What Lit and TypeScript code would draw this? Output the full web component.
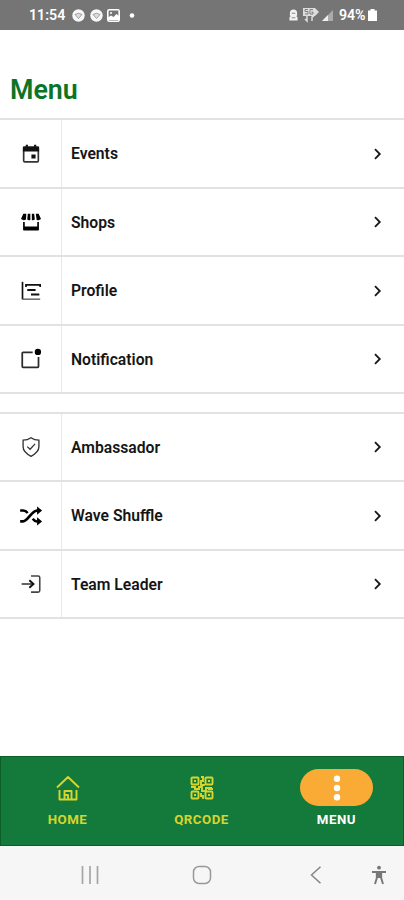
import { LitElement, html, css, svg } from "lit";
import { customElement } from "lit/decorators.js";

const icons: Record<string, unknown> = {
  events: svg`<path d="M7 1v3M17 1v3" stroke="#111" stroke-width="2.6"/><path d="M4.500 4h15a1.300 1.300 0 0 1 1.300 1.300v14.900a1.300 1.300 0 0 1-1.300 1.300h-15a1.300 1.300 0 0 1-1.300-1.300V5.300A1.300 1.300 0 0 1 4.500 4z" fill="none" stroke="#333" stroke-width="2"/><path d="M2.300 3h19.400v6H2.300zM12.500 12.500h5v5h-5z" fill="#111"/>`,
  shops: svg`<path d="M2.800 2h3.600l-.4 7Q3 10.800 0 8.500zM8.200 2h3v7.500q-2.300.8-3.700-.5zM13 2h2.800l.8 7q-2 1.300-3.600.5zM17.800 2h3.400l2.800 6.500q-2.600 2.300-5.300.7z" fill="#000"/><path d="M2.500 12h2v5.500h15V12h2v9.300q0 1-1 1h-17q-1 0-1-1z" fill="#000"/>`,
  profile: svg`<path d="M1.800 1v21" stroke="#111" stroke-width="2"/><path d="M1.800 21.800H23" stroke="#555" stroke-width="1.600"/><path d="M6 7.200V4.500h17v2.700" fill="none" stroke="#111" stroke-width="2.100"/><path d="M7.500 10.800h10M12 16.200h10" stroke="#111" stroke-width="2.400"/>`,
  notification: svg`<path d="M14 4H2.500q-1 0-1 1v16q0 1 1 1h17.500q1 0 1-1V9.500" fill="none" stroke="#2b2b2b" stroke-width="2.100"/><circle cx="20.300" cy="3.500" r="3.800" fill="#000"/>`,
  ambassador: svg`<path d="M12 .8q4 3 9.500 3v8q0 6.400-9.500 11.400-9.500-5-9.500-11.400v-8q5.500 0 9.500-3z" fill="none" stroke="#333" stroke-width="1.600"/><path d="m7.500 11.500 3.400 3.200 6-6.400" fill="none" stroke="#333" stroke-width="1.500"/>`,
  shuffle: svg`<path d="M-1 18.500h3.500C8 18.500 13 5.500 19 5.500h1" fill="none" stroke="#000" stroke-width="3.200"/><path d="M-1 5.500h3.500q3.300 0 5.500 3M14 15.300q2.300 3.200 5 3.200h1" fill="none" stroke="#000" stroke-width="3"/><path d="m19.300.5 6 5-6 5zM19.300 13.500l6 5-6 5z" fill="#000"/>`,
  leader: svg`<path d="M12 2.300h8.500q2 0 2 2v15.400q0 2-2 2H12" fill="none" stroke="#444" stroke-width="1.900"/><path d="M.8 12H14" stroke="#444" stroke-width="2"/><path d="m10 7.500 5 4.500-5 4.500" fill="none" stroke="#111" stroke-width="2.300"/>`,
};

const groups = [
  [["events", "Events"], ["shops", "Shops"], ["profile", "Profile"], ["notification", "Notification"]],
  [["ambassador", "Ambassador"], ["shuffle", "Wave Shuffle"], ["leader", "Team Leader"]],
];

@customElement("app-root")
export class AppRoot extends LitElement {
  static styles = css`
    :host { display: flex; flex-direction: column; width: 404px; height: 900px; background: #fff; font-family: Roboto, sans-serif; overflow: hidden; box-sizing: border-box; }
    * { box-sizing: border-box; }
    svg { display: block; flex: none; overflow: visible; }
    .status { height: 29.500px; flex: none; background: #757575; color: #fff; display: flex; align-items: center; padding: 1px 27px 0 29px; font-size: 14.200px; font-weight: 600; }
    .time { width: 43px; }
    .spacer { flex: 1; }
    .battery { width: 29px; margin-left: 5px; letter-spacing: -.1px; }
    h1 { margin: 0; height: 88.800px; flex: none; padding: 44.600px 0 0 10px; color: #0c7425; font-size: 26.800px; line-height: 32px; font-weight: 580; }
    .group { flex: none; border-top: 2px solid #e2e2e2; margin-bottom: 17.600px; }
    .row { height: 68.500px; display: flex; align-items: center; border-bottom: 2px solid #e2e2e2; }
    .icon { width: 61.500px; align-self: stretch; display: flex; align-items: center; justify-content: center; border-right: 1px solid #e8e8e8; }
    .icon svg { margin-left: 1px; }
    .label { flex: 1; padding-left: 9.500px; font-size: 15.700px; font-weight: 600; color: #151515; }
    .arrow { margin-right: 20px; }
    .tabs { margin-top: auto; height: 90px; flex: none; display: flex; background: #147a3c; border: 1px solid #0c5d28; }
    .tab { flex: 1; display: flex; flex-direction: column; align-items: center; padding-top: 12px; color: #d7d52d; font-size: 13.300px; font-weight: 680; letter-spacing: .5px; }
    .tab:nth-child(2) { padding-left: 1px; }
    .tab:last-child { padding-left: 2px; }
    .pill { width: 73px; height: 37px; display: flex; align-items: center; justify-content: center; border-radius: 19px; margin-bottom: 6px; }
    .active { color: #fff; }
    .active .pill { background: #faab36; }
    .tab span { line-height: 16px; }
    .nav { height: 54px; flex: none; background: #f6f6f6; display: grid; grid-template-columns: 146px 113px 114px 1fr; align-items: center; }
    .nav svg { margin-top: 3px; }
    .nav .recent { justify-self: center; margin-left: 33px; }
    .nav .home { margin-left: 46px; }
    .nav .back { margin-left: 51px; }
    .nav .access { margin-left: -2px; }
  `;

  chrome() {
    return html`<svg width="13" height="13" viewBox="0 0 13 13"><circle cx="6.500" cy="6.500" r="6.200" fill="#f7f7f7"/><path d="M3 5.500Q6.500 3 10 5.500L6.500 9.500z" fill="#ddd" stroke="#999" stroke-width=".9"/></svg>`;
  }

  render() {
    return html`
      <div class="status">
        <span class="time">11:54</span>${this.chrome()}
        <svg width="5" height="13"></svg>${this.chrome()}
        <svg width="4" height="13"></svg>
        <svg width="13" height="13" viewBox="0 0 13 13"><rect x=".8" y=".8" width="11.400" height="11.400" rx="1.500" fill="none" stroke="#fff" stroke-width="1.600"/><path d="M1 11V8.500l3-2 2.500 1.500 3-3L12 7v4z" fill="#fff"/><circle cx="4" cy="4" r="1" fill="#fff"/></svg>
        <svg width="20" height="13"><circle cx="12" cy="6.500" r="2.300" fill="#fff"/></svg>
        <span class="spacer"></span>
        <svg width="9" height="14" viewBox="0 0 10 14"><path d="M1 5a4 4 0 0 1 8 0v2.500L8 8l1.500 1.500V13H.5V9.500L2 8 1 7.500z" fill="#f2f2f2"/><path d="M3 5h4M3 10h4" stroke="#888" stroke-width="1.200"/></svg>
        <svg width="23" height="14" viewBox="0 0 23 14"><path d="M5 0h12l4 4-4 4H5z" fill="#ddd"/><path d="M10 1.500H7v2h3v2.500H7M15 1.500h-3V6h3V4h-1.500" fill="none" stroke="#777" stroke-width=".9"/><path d="M9 8v5l-2-2M14 13V9l2-1" fill="none" stroke="#ddd" stroke-width="1.500"/></svg>
        <svg width="13" height="13" viewBox="0 0 13 13"><path d="M1 12 12 1v11z" fill="#aaa"/><path d="M1 12 7 6v6z" fill="#eee"/></svg>
        <span class="battery">94%</span>
        <svg width="9" height="12" viewBox="0 0 9 12"><path d="M2.500 0h4v1.500H9V12H0V1.500h2.500z" fill="#fff"/></svg>
      </div>
      <h1>Menu</h1>
      ${groups.map((group) => html`<div class="group">${group.map(([icon, label]) => html`
        <div class="row">
          <div class="icon"><svg width="20" height="20" viewBox="0 0 24 24">${icons[icon]}</svg></div>
          <span class="label">${label}</span>
          <svg class="arrow" width="14" height="14" viewBox="0 0 14 14"><path d="m5 2.200 4.800 4.800L5 11.800" fill="none" stroke="#181818" stroke-width="1.800"/></svg>
        </div>`)}</div>`)}
      <div class="tabs">
        <div class="tab"><div class="pill"><svg width="24" height="26" viewBox="0 0 24 26"><path d="M1 12.500 12 2l11 10.500M3.500 15v9.500h17V15M8.500 24v-8h7v8M8.500 20h3.500v4" fill="none" stroke="currentColor" stroke-width="1.900" stroke-linejoin="round"/></svg></div><span>HOME</span></div>
        <div class="tab"><div class="pill"><svg width="24" height="24" viewBox="0 0 24 24"><g fill="none" stroke="currentColor" stroke-width="1.900"><rect x="1.500" y="1.500" width="7" height="7" rx="1"/><rect x="15.500" y="1.500" width="7" height="7" rx="1"/><rect x="1.500" y="15.500" width="7" height="7" rx="1"/><rect x="15.500" y="15.500" width="7" height="7" rx="1"/><path d="M11 1h2v4h-2v4h4M1 11h4v2h4v-2h3v4h4v-3h6M11 17v3h2v3M18 13h5M4 5h2M18 5h2M4 19h2M18 19h2"/></g></svg></div><span>QRCODE</span></div>
        <div class="tab active"><div class="pill"><svg width="8" height="28" viewBox="0 0 8 28" fill="#fff"><circle cx="4" cy="4.700" r="3.200"/><circle cx="4" cy="14" r="3.200"/><circle cx="4" cy="23.300" r="3.200"/></svg></div><span>MENU</span></div>
      </div>
      <div class="nav">
        <svg class="recent" width="18" height="18" viewBox="0 0 18 18"><path d="M1.500 0v18M9 0v18M16.500 0v18" stroke="#a5a5a5" stroke-width="1.700"/></svg>
        <svg class="home" width="20" height="20" viewBox="0 0 20 20"><rect x="1.500" y="1.500" width="17" height="17" rx="5.500" fill="none" stroke="#999" stroke-width="1.500"/></svg>
        <svg class="back" width="12" height="20" viewBox="0 0 12 20"><path d="m10.500 1.800-9 8.200 9 8.200" fill="none" stroke="#858585" stroke-width="1.500"/></svg>
        <svg class="access" width="16" height="20" viewBox="0 0 16 20"><circle cx="8" cy="2.700" r="1.900" fill="#777"/><path d="M1 7h14M5.800 7v6L4 19M10.200 7v6l1.800 6" fill="none" stroke="#777" stroke-width="1.900"/><path d="M5 7h6v6H5z" fill="#777"/></svg>
      </div>`;
  }
}
